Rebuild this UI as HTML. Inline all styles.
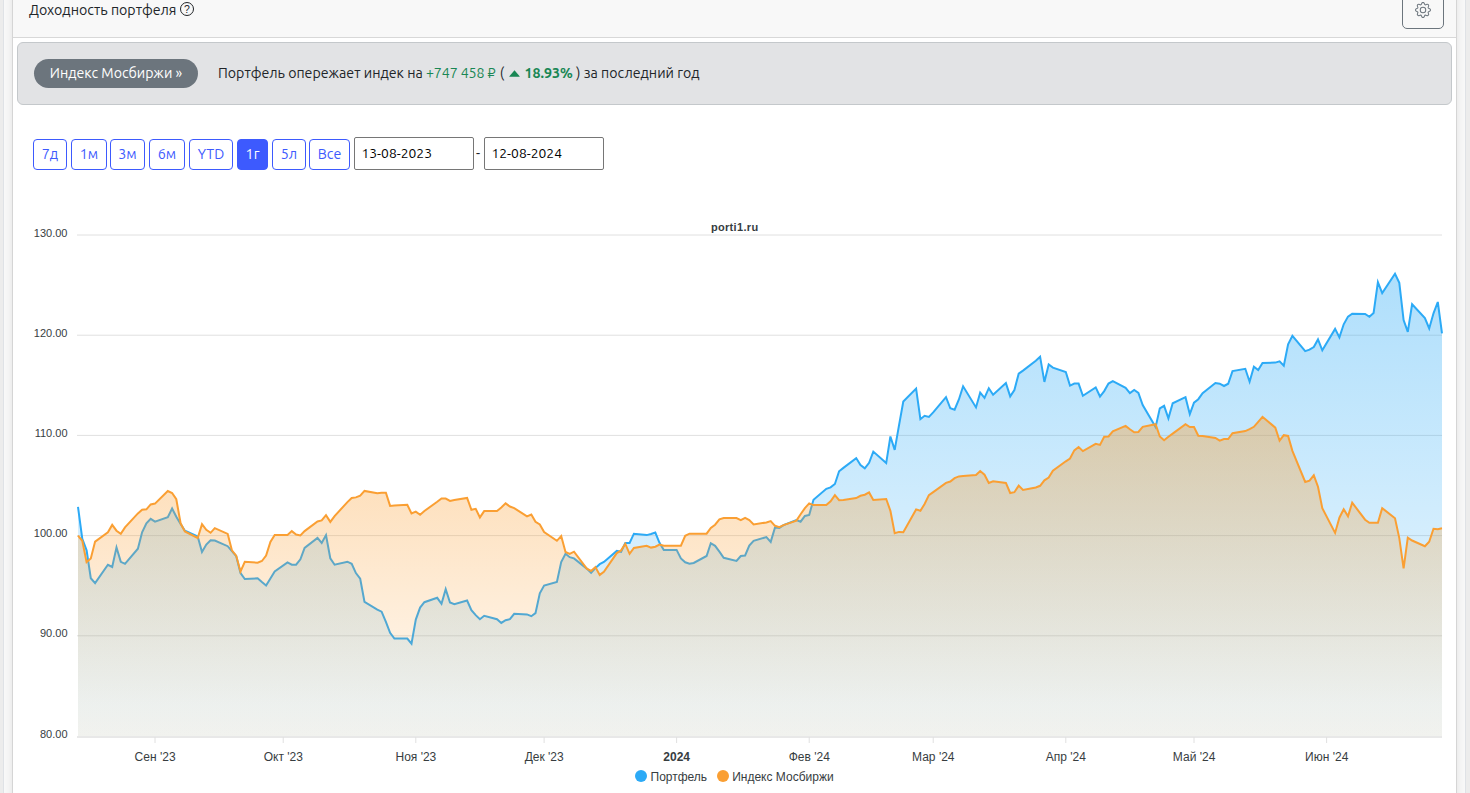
<!DOCTYPE html>
<html lang="ru"><head><meta charset="utf-8"><title>Доходность портфеля</title>
<style>
html,body{margin:0;padding:0}
body{width:1470px;height:793px;overflow:hidden;background:#ececec;position:relative;font-family:"Ubuntu","Liberation Sans",sans-serif;font-size:14.2px;color:#212529}
#outer{position:absolute;left:3px;top:-20px;width:1461px;height:900px;border:1px solid #dfe2e6;background:#f8f8f8}
#card{position:absolute;left:12px;top:-20px;width:1443px;height:900px;border:1px solid #d5d5d5;background:#fff;box-shadow:0 0 8px rgba(0,0,0,.09)}
#hdr{position:absolute;left:13px;top:0;width:1443px;height:37px;background:#f8f8f8;border-bottom:1px solid #d8d8d8}
#title{position:absolute;left:29px;top:0;line-height:20px;white-space:nowrap}
#gearbtn{position:absolute;left:1402px;top:-10px;width:40px;height:37px;border:1px solid #6c757d;border-radius:5px}
#alert{position:absolute;left:17px;top:42px;width:1433px;height:61px;border:1px solid #c4c8cb;background:#e2e3e5;border-radius:6px}
#badge{position:absolute;left:34px;top:59px;width:164px;height:29px;border-radius:15px;background:#6c757d;color:#fff;text-align:center;line-height:28px;white-space:nowrap}
#msg{position:absolute;left:218px;top:63px;line-height:20px;white-space:nowrap}
.g{color:#198754}
.b{position:absolute;top:139px;height:29px;border:1px solid #3d5afe;border-radius:4px;color:#3d5afe;text-align:center;line-height:28px;font-size:14.25px;box-sizing:border-box;height:31px}
.b.on{background:#3d5afe;color:#fff}
.inp{position:absolute;top:137px;width:120px;height:33px;box-sizing:border-box;border:1px solid #767676;border-radius:2px;background:#fff;line-height:31px;padding-left:6.5px;font-size:13.85px;color:#000}
#q{position:absolute;left:180px;top:2px;width:14px;height:14px;box-sizing:border-box;border:1px solid #212529;border-radius:50%;font-family:"Liberation Sans",sans-serif;font-size:10.5px;line-height:12.5px;text-align:center;color:#212529}
#dash{position:absolute;left:476px;top:143px;line-height:20px}
</style></head><body>
<div id="outer"></div>
<div id="card"></div>
<div id="hdr"></div>
<div id="title">Доходность портфеля</div>
<div id="q">?</div>
<div id="gearbtn"><svg width="16" height="16" fill="#6c757d" viewBox="0 0 16 16" style="position:absolute;left:12px;top:10.8px"><path d="M8 4.754a3.246 3.246 0 1 0 0 6.492 3.246 3.246 0 0 0 0-6.492M5.754 8a2.246 2.246 0 1 1 4.492 0 2.246 2.246 0 0 1-4.492 0"/><path d="M9.796 1.343c-.527-1.79-3.065-1.79-3.592 0l-.094.319a.873.873 0 0 1-1.255.52l-.292-.16c-1.64-.892-3.433.902-2.54 2.541l.159.292a.873.873 0 0 1-.52 1.255l-.319.094c-1.79.527-1.79 3.065 0 3.592l.319.094a.873.873 0 0 1 .52 1.255l-.16.292c-.892 1.64.901 3.434 2.541 2.54l.292-.159a.873.873 0 0 1 1.255.52l.094.319c.527 1.79 3.065 1.79 3.592 0l.094-.319a.873.873 0 0 1 1.255-.52l.292.16c1.64.893 3.434-.902 2.54-2.541l-.159-.292a.873.873 0 0 1 .52-1.255l.319-.094c1.79-.527 1.79-3.065 0-3.592l-.319-.094a.873.873 0 0 1-.52-1.255l.16-.292c.893-1.64-.902-3.433-2.541-2.54l-.292.159a.873.873 0 0 1-1.255-.52zm-2.633.283c.246-.835 1.428-.835 1.674 0l.094.319a1.873 1.873 0 0 0 2.693 1.115l.291-.16c.764-.415 1.6.42 1.184 1.185l-.159.292a1.873 1.873 0 0 0 1.116 2.692l.318.094c.835.246.835 1.428 0 1.674l-.319.094a1.873 1.873 0 0 0-1.115 2.693l.16.291c.415.764-.42 1.6-1.185 1.184l-.291-.159a1.873 1.873 0 0 0-2.693 1.116l-.094.318c-.246.835-1.428.835-1.674 0l-.094-.319a1.873 1.873 0 0 0-2.692-1.115l-.292.16c-.764.415-1.6-.42-1.184-1.185l.159-.291A1.873 1.873 0 0 0 1.945 8.93l-.319-.094c-.835-.246-.835-1.428 0-1.674l.319-.094A1.873 1.873 0 0 0 3.06 4.377l-.16-.292c-.415-.764.42-1.6 1.185-1.184l.292.159a1.873 1.873 0 0 0 2.692-1.115z"/></svg></div>
<div id="alert"></div>
<div id="badge">Индекс Мосбиржи »</div>
<div id="msg">Портфель опережает индек на <span class="g" style="letter-spacing:-.11px;margin-right:1.2px">+747 458 ₽</span> ( <span class="g"><svg width="11" height="7" viewBox="0 0 11 7" style="vertical-align:1px;margin:0 5px 0 1px"><path d="M5.5 0.3 L10.6 6.2 Q10.9 6.8 10.2 6.8 L0.8 6.8 Q0.1 6.8 0.4 6.2 Z" fill="#198754"/></svg><b>18.93%</b></span> ) за последний год</div>
<div class="b" style="left:33px;width:34px">7д</div><div class="b" style="left:71px;width:36px">1м</div><div class="b" style="left:110px;width:35px">3м</div><div class="b" style="left:149px;width:36px">6м</div><div class="b" style="left:189px;width:44px">YTD</div><div class="b on" style="left:237px;width:31px">1г</div><div class="b" style="left:272px;width:34px">5л</div><div class="b" style="left:309px;width:41px">Все</div>
<div class="inp" style="left:354px">13-08-2023</div>
<div id="dash">-</div>
<div class="inp" style="left:484px">12-08-2024</div>
<svg id="chart" width="1470" height="793" viewBox="0 0 1470 793" style="position:absolute;left:0;top:0">
<defs>
<linearGradient id="gb" x1="0" y1="0" x2="0" y2="1"><stop offset="0" stop-color="#2caaf6" stop-opacity=".38"/><stop offset="1" stop-color="#2caaf6" stop-opacity=".07"/></linearGradient>
<linearGradient id="go" x1="0" y1="0" x2="0" y2="1"><stop offset="0" stop-color="#fa9f33" stop-opacity=".40"/><stop offset=".9" stop-color="#fa9f33" stop-opacity=".08"/><stop offset="1" stop-color="#fa9f33" stop-opacity=".08"/></linearGradient>
<clipPath id="cp"><rect x="77" y="225" width="1366" height="511"/></clipPath>
</defs>
<line x1="77" x2="1442" y1="235.00" y2="235.00" stroke="#e0e0e0" stroke-width="1"/>
<line x1="77" x2="1442" y1="335.20" y2="335.20" stroke="#e0e0e0" stroke-width="1"/>
<line x1="77" x2="1442" y1="435.40" y2="435.40" stroke="#e0e0e0" stroke-width="1"/>
<line x1="77" x2="1442" y1="535.60" y2="535.60" stroke="#e0e0e0" stroke-width="1"/>
<line x1="77" x2="1442" y1="635.80" y2="635.80" stroke="#e0e0e0" stroke-width="1"/>
<g clip-path="url(#cp)">
<path d="M78.0 506.9 L82.3 538.9 L86.6 550.3 L90.8 578.2 L95.1 583.1 L107.9 564.8 L112.2 567.0 L116.5 547.4 L120.8 561.8 L125.0 563.8 L137.9 548.7 L142.1 532.3 L146.4 523.3 L150.7 518.9 L155.0 521.6 L167.8 517.2 L172.1 508.5 L176.3 516.7 L180.6 524.1 L184.9 530.7 L197.7 536.4 L202.0 552.0 L206.3 544.6 L210.6 540.2 L214.8 540.5 L227.7 546.2 L231.9 551.1 L236.2 556.1 L240.5 573.0 L244.8 579.0 L257.6 578.3 L261.9 582.1 L266.1 585.5 L270.4 578.5 L274.7 571.5 L287.5 562.4 L291.8 564.7 L296.1 564.7 L300.4 559.3 L304.6 547.9 L317.5 537.9 L321.7 542.9 L326.0 535.1 L330.3 558.3 L334.6 564.7 L347.4 561.7 L351.7 563.8 L355.9 573.1 L360.2 578.7 L364.5 601.9 L377.3 609.7 L381.6 611.7 L385.9 621.9 L390.1 632.8 L394.4 638.5 L407.3 638.5 L411.5 643.7 L415.8 619.6 L420.1 607.6 L424.4 602.2 L437.2 597.8 L441.5 603.8 L445.7 589.2 L450.0 602.5 L454.3 604.2 L467.1 600.5 L471.4 610.1 L475.7 615.1 L479.9 619.2 L484.2 615.8 L497.0 619.2 L501.3 622.9 L505.6 620.2 L509.9 619.2 L514.2 613.8 L527.0 614.4 L531.3 616.2 L535.5 613.1 L539.8 593.3 L544.1 585.5 L556.9 582.0 L561.2 562.0 L565.5 553.8 L569.7 557.2 L574.0 558.4 L586.8 568.6 L591.1 572.9 L595.4 568.1 L599.7 564.2 L603.9 562.0 L616.8 550.9 L621.1 551.8 L625.3 542.9 L629.6 542.9 L633.9 533.7 L646.7 535.1 L651.0 534.0 L655.3 532.6 L659.5 542.8 L663.8 549.9 L676.6 549.9 L680.9 558.5 L685.2 562.3 L689.5 563.7 L693.7 563.0 L706.6 556.0 L710.8 543.2 L715.1 545.8 L719.4 551.7 L723.7 557.8 L736.5 560.9 L740.8 556.0 L745.1 555.5 L749.3 545.6 L753.6 540.8 L766.4 537.1 L770.7 541.9 L775.0 527.5 L779.3 527.9 L783.5 525.1 L796.4 520.1 L800.6 521.7 L804.9 516.0 L809.2 514.9 L813.5 499.7 L826.3 488.8 L830.6 487.4 L834.9 484.0 L839.1 471.3 L843.4 467.9 L856.2 458.1 L860.5 465.1 L864.8 468.4 L869.1 462.8 L873.3 451.6 L886.2 463.1 L890.4 436.5 L894.7 449.9 L899.0 425.4 L903.3 401.5 L916.1 388.6 L920.4 419.2 L924.6 415.8 L928.9 416.9 L933.2 412.4 L946.0 397.2 L950.3 408.3 L954.6 409.7 L958.9 399.5 L963.1 386.3 L976.0 407.4 L980.2 392.7 L984.5 397.8 L988.8 388.2 L993.1 394.7 L1005.9 383.1 L1010.2 396.4 L1014.4 390.0 L1018.7 373.7 L1023.0 370.6 L1035.8 360.8 L1040.1 356.7 L1044.4 381.9 L1048.7 364.5 L1052.9 367.6 L1065.8 372.0 L1070.0 385.6 L1074.3 383.6 L1078.6 383.6 L1082.9 395.8 L1095.7 387.4 L1100.0 396.5 L1104.2 391.1 L1108.5 383.6 L1112.8 381.1 L1125.6 387.9 L1129.9 393.1 L1134.2 390.0 L1138.4 392.8 L1142.7 405.1 L1155.6 427.1 L1159.8 408.3 L1164.1 405.8 L1168.4 418.3 L1172.7 403.3 L1185.5 397.2 L1189.8 414.2 L1194.0 402.6 L1198.3 399.2 L1202.6 393.2 L1215.4 383.0 L1219.7 383.7 L1224.0 386.0 L1228.2 383.7 L1232.5 371.1 L1245.3 368.8 L1249.6 381.7 L1253.9 366.7 L1258.2 370.1 L1262.5 363.0 L1275.3 362.6 L1279.6 361.3 L1283.8 365.6 L1288.1 344.4 L1292.4 335.9 L1305.2 351.1 L1309.5 349.7 L1313.8 347.1 L1318.0 339.4 L1322.3 350.3 L1335.1 328.9 L1339.4 337.4 L1343.7 324.3 L1348.0 316.6 L1352.2 313.7 L1365.1 313.9 L1369.4 316.8 L1373.6 312.9 L1377.9 282.2 L1382.2 293.1 L1395.0 273.8 L1399.3 282.9 L1403.6 320.1 L1407.8 331.9 L1412.1 304.3 L1424.9 318.0 L1429.2 328.5 L1433.5 313.3 L1437.8 302.0 L1442.0 333.3 L1442.0 736.2 L78.0 736.2 Z" fill="url(#gb)"/>
<path d="M78.0 506.9 L82.3 538.9 L86.6 550.3 L90.8 578.2 L95.1 583.1 L107.9 564.8 L112.2 567.0 L116.5 547.4 L120.8 561.8 L125.0 563.8 L137.9 548.7 L142.1 532.3 L146.4 523.3 L150.7 518.9 L155.0 521.6 L167.8 517.2 L172.1 508.5 L176.3 516.7 L180.6 524.1 L184.9 530.7 L197.7 536.4 L202.0 552.0 L206.3 544.6 L210.6 540.2 L214.8 540.5 L227.7 546.2 L231.9 551.1 L236.2 556.1 L240.5 573.0 L244.8 579.0 L257.6 578.3 L261.9 582.1 L266.1 585.5 L270.4 578.5 L274.7 571.5 L287.5 562.4 L291.8 564.7 L296.1 564.7 L300.4 559.3 L304.6 547.9 L317.5 537.9 L321.7 542.9 L326.0 535.1 L330.3 558.3 L334.6 564.7 L347.4 561.7 L351.7 563.8 L355.9 573.1 L360.2 578.7 L364.5 601.9 L377.3 609.7 L381.6 611.7 L385.9 621.9 L390.1 632.8 L394.4 638.5 L407.3 638.5 L411.5 643.7 L415.8 619.6 L420.1 607.6 L424.4 602.2 L437.2 597.8 L441.5 603.8 L445.7 589.2 L450.0 602.5 L454.3 604.2 L467.1 600.5 L471.4 610.1 L475.7 615.1 L479.9 619.2 L484.2 615.8 L497.0 619.2 L501.3 622.9 L505.6 620.2 L509.9 619.2 L514.2 613.8 L527.0 614.4 L531.3 616.2 L535.5 613.1 L539.8 593.3 L544.1 585.5 L556.9 582.0 L561.2 562.0 L565.5 553.8 L569.7 557.2 L574.0 558.4 L586.8 568.6 L591.1 572.9 L595.4 568.1 L599.7 564.2 L603.9 562.0 L616.8 550.9 L621.1 551.8 L625.3 542.9 L629.6 542.9 L633.9 533.7 L646.7 535.1 L651.0 534.0 L655.3 532.6 L659.5 542.8 L663.8 549.9 L676.6 549.9 L680.9 558.5 L685.2 562.3 L689.5 563.7 L693.7 563.0 L706.6 556.0 L710.8 543.2 L715.1 545.8 L719.4 551.7 L723.7 557.8 L736.5 560.9 L740.8 556.0 L745.1 555.5 L749.3 545.6 L753.6 540.8 L766.4 537.1 L770.7 541.9 L775.0 527.5 L779.3 527.9 L783.5 525.1 L796.4 520.1 L800.6 521.7 L804.9 516.0 L809.2 514.9 L813.5 499.7 L826.3 488.8 L830.6 487.4 L834.9 484.0 L839.1 471.3 L843.4 467.9 L856.2 458.1 L860.5 465.1 L864.8 468.4 L869.1 462.8 L873.3 451.6 L886.2 463.1 L890.4 436.5 L894.7 449.9 L899.0 425.4 L903.3 401.5 L916.1 388.6 L920.4 419.2 L924.6 415.8 L928.9 416.9 L933.2 412.4 L946.0 397.2 L950.3 408.3 L954.6 409.7 L958.9 399.5 L963.1 386.3 L976.0 407.4 L980.2 392.7 L984.5 397.8 L988.8 388.2 L993.1 394.7 L1005.9 383.1 L1010.2 396.4 L1014.4 390.0 L1018.7 373.7 L1023.0 370.6 L1035.8 360.8 L1040.1 356.7 L1044.4 381.9 L1048.7 364.5 L1052.9 367.6 L1065.8 372.0 L1070.0 385.6 L1074.3 383.6 L1078.6 383.6 L1082.9 395.8 L1095.7 387.4 L1100.0 396.5 L1104.2 391.1 L1108.5 383.6 L1112.8 381.1 L1125.6 387.9 L1129.9 393.1 L1134.2 390.0 L1138.4 392.8 L1142.7 405.1 L1155.6 427.1 L1159.8 408.3 L1164.1 405.8 L1168.4 418.3 L1172.7 403.3 L1185.5 397.2 L1189.8 414.2 L1194.0 402.6 L1198.3 399.2 L1202.6 393.2 L1215.4 383.0 L1219.7 383.7 L1224.0 386.0 L1228.2 383.7 L1232.5 371.1 L1245.3 368.8 L1249.6 381.7 L1253.9 366.7 L1258.2 370.1 L1262.5 363.0 L1275.3 362.6 L1279.6 361.3 L1283.8 365.6 L1288.1 344.4 L1292.4 335.9 L1305.2 351.1 L1309.5 349.7 L1313.8 347.1 L1318.0 339.4 L1322.3 350.3 L1335.1 328.9 L1339.4 337.4 L1343.7 324.3 L1348.0 316.6 L1352.2 313.7 L1365.1 313.9 L1369.4 316.8 L1373.6 312.9 L1377.9 282.2 L1382.2 293.1 L1395.0 273.8 L1399.3 282.9 L1403.6 320.1 L1407.8 331.9 L1412.1 304.3 L1424.9 318.0 L1429.2 328.5 L1433.5 313.3 L1437.8 302.0 L1442.0 333.3" fill="none" stroke="#2caaf6" stroke-width="2" stroke-linecap="butt" stroke-linejoin="miter"/>
<path d="M78.0 535.6 L82.3 540.8 L86.6 562.1 L90.8 558.5 L95.1 541.6 L107.9 532.3 L112.2 524.9 L116.5 530.7 L120.8 533.9 L125.0 527.4 L137.9 513.4 L142.1 509.7 L146.4 509.3 L150.7 504.4 L155.0 503.6 L167.8 491.0 L172.1 493.0 L176.3 499.2 L180.6 523.3 L184.9 531.5 L197.7 538.0 L202.0 524.1 L206.3 529.8 L210.6 532.8 L214.8 528.2 L227.7 533.9 L231.9 550.3 L236.2 555.6 L240.5 571.6 L244.8 561.8 L257.6 562.7 L261.9 561.0 L266.1 555.6 L270.4 541.9 L274.7 534.9 L287.5 535.0 L291.8 531.1 L296.1 534.5 L300.4 535.4 L304.6 531.1 L317.5 521.5 L321.7 520.4 L326.0 515.1 L330.3 521.9 L334.6 516.1 L347.4 502.1 L351.7 498.0 L355.9 497.4 L360.2 495.7 L364.5 490.9 L377.3 493.2 L381.6 492.7 L385.9 492.7 L390.1 505.9 L394.4 505.5 L407.3 504.8 L411.5 513.4 L415.8 511.6 L420.1 514.7 L424.4 511.0 L437.2 501.8 L441.5 498.4 L445.7 498.6 L450.0 500.9 L454.3 500.0 L467.1 497.9 L471.4 509.8 L475.7 508.8 L479.9 517.4 L484.2 511.1 L497.0 511.1 L501.3 507.5 L505.6 503.4 L509.9 506.5 L514.2 508.1 L527.0 516.3 L531.3 514.5 L535.5 521.8 L539.8 524.5 L544.1 532.0 L556.9 540.8 L561.2 536.1 L565.5 552.0 L569.7 553.8 L574.0 551.7 L586.8 568.7 L591.1 571.0 L595.4 567.1 L599.7 574.9 L603.9 571.7 L616.8 553.1 L621.1 550.4 L625.3 543.8 L629.6 553.8 L633.9 547.9 L646.7 545.8 L651.0 547.6 L655.3 546.7 L659.5 544.6 L663.8 545.7 L676.6 545.7 L680.9 545.7 L685.2 535.8 L689.5 533.7 L693.7 533.7 L706.6 533.7 L710.8 527.9 L715.1 524.7 L719.4 519.3 L723.7 518.1 L736.5 518.1 L740.8 520.1 L745.1 517.9 L749.3 520.1 L753.6 524.5 L766.4 522.4 L770.7 521.1 L775.0 525.8 L779.3 527.2 L783.5 525.1 L796.4 520.6 L800.6 514.2 L804.9 508.1 L809.2 503.4 L813.5 505.1 L826.3 505.1 L830.6 501.3 L834.9 495.1 L839.1 500.2 L843.4 499.9 L856.2 498.1 L860.5 495.8 L864.8 494.7 L869.1 492.4 L873.3 499.9 L886.2 499.0 L890.4 510.8 L894.7 533.3 L899.0 531.9 L903.3 532.2 L916.1 509.4 L920.4 510.8 L924.6 504.0 L928.9 495.1 L933.2 492.1 L946.0 482.9 L950.3 481.5 L954.6 478.1 L958.9 476.4 L963.1 476.1 L976.0 475.0 L980.2 471.0 L984.5 474.7 L988.8 482.9 L993.1 481.3 L1005.9 482.9 L1010.2 493.0 L1014.4 492.2 L1018.7 485.6 L1023.0 489.9 L1035.8 487.5 L1040.1 485.8 L1044.4 480.3 L1048.7 477.6 L1052.9 470.8 L1065.8 461.3 L1070.0 458.5 L1074.3 450.4 L1078.6 447.0 L1082.9 451.1 L1095.7 443.8 L1100.0 444.9 L1104.2 436.8 L1108.5 436.5 L1112.8 431.3 L1125.6 425.9 L1129.9 429.3 L1134.2 432.3 L1138.4 432.0 L1142.7 426.8 L1155.6 424.2 L1159.8 436.5 L1164.1 440.2 L1168.4 436.8 L1172.7 433.6 L1185.5 424.2 L1189.8 427.0 L1194.0 427.0 L1198.3 435.8 L1202.6 436.0 L1215.4 438.0 L1219.7 440.7 L1224.0 439.0 L1228.2 439.0 L1232.5 433.2 L1245.3 431.1 L1249.6 429.1 L1253.9 426.8 L1258.2 421.8 L1262.5 416.8 L1275.3 427.7 L1279.6 440.7 L1283.8 435.2 L1288.1 435.9 L1292.4 450.9 L1305.2 482.0 L1309.5 480.6 L1313.8 475.3 L1318.0 486.7 L1322.3 508.2 L1335.1 532.9 L1339.4 517.7 L1343.7 509.2 L1348.0 516.3 L1352.2 502.7 L1365.1 519.7 L1369.4 522.8 L1373.6 522.8 L1377.9 522.8 L1382.2 508.1 L1395.0 518.3 L1399.3 538.1 L1403.6 568.3 L1407.8 537.7 L1412.1 540.5 L1424.9 546.2 L1429.2 541.7 L1433.5 528.8 L1437.8 529.2 L1442.0 528.3 L1442.0 736.2 L78.0 736.2 Z" fill="url(#go)"/>
<path d="M78.0 535.6 L82.3 540.8 L86.6 562.1 L90.8 558.5 L95.1 541.6 L107.9 532.3 L112.2 524.9 L116.5 530.7 L120.8 533.9 L125.0 527.4 L137.9 513.4 L142.1 509.7 L146.4 509.3 L150.7 504.4 L155.0 503.6 L167.8 491.0 L172.1 493.0 L176.3 499.2 L180.6 523.3 L184.9 531.5 L197.7 538.0 L202.0 524.1 L206.3 529.8 L210.6 532.8 L214.8 528.2 L227.7 533.9 L231.9 550.3 L236.2 555.6 L240.5 571.6 L244.8 561.8 L257.6 562.7 L261.9 561.0 L266.1 555.6 L270.4 541.9 L274.7 534.9 L287.5 535.0 L291.8 531.1 L296.1 534.5 L300.4 535.4 L304.6 531.1 L317.5 521.5 L321.7 520.4 L326.0 515.1 L330.3 521.9 L334.6 516.1 L347.4 502.1 L351.7 498.0 L355.9 497.4 L360.2 495.7 L364.5 490.9 L377.3 493.2 L381.6 492.7 L385.9 492.7 L390.1 505.9 L394.4 505.5 L407.3 504.8 L411.5 513.4 L415.8 511.6 L420.1 514.7 L424.4 511.0 L437.2 501.8 L441.5 498.4 L445.7 498.6 L450.0 500.9 L454.3 500.0 L467.1 497.9 L471.4 509.8 L475.7 508.8 L479.9 517.4 L484.2 511.1 L497.0 511.1 L501.3 507.5 L505.6 503.4 L509.9 506.5 L514.2 508.1 L527.0 516.3 L531.3 514.5 L535.5 521.8 L539.8 524.5 L544.1 532.0 L556.9 540.8 L561.2 536.1 L565.5 552.0 L569.7 553.8 L574.0 551.7 L586.8 568.7 L591.1 571.0 L595.4 567.1 L599.7 574.9 L603.9 571.7 L616.8 553.1 L621.1 550.4 L625.3 543.8 L629.6 553.8 L633.9 547.9 L646.7 545.8 L651.0 547.6 L655.3 546.7 L659.5 544.6 L663.8 545.7 L676.6 545.7 L680.9 545.7 L685.2 535.8 L689.5 533.7 L693.7 533.7 L706.6 533.7 L710.8 527.9 L715.1 524.7 L719.4 519.3 L723.7 518.1 L736.5 518.1 L740.8 520.1 L745.1 517.9 L749.3 520.1 L753.6 524.5 L766.4 522.4 L770.7 521.1 L775.0 525.8 L779.3 527.2 L783.5 525.1 L796.4 520.6 L800.6 514.2 L804.9 508.1 L809.2 503.4 L813.5 505.1 L826.3 505.1 L830.6 501.3 L834.9 495.1 L839.1 500.2 L843.4 499.9 L856.2 498.1 L860.5 495.8 L864.8 494.7 L869.1 492.4 L873.3 499.9 L886.2 499.0 L890.4 510.8 L894.7 533.3 L899.0 531.9 L903.3 532.2 L916.1 509.4 L920.4 510.8 L924.6 504.0 L928.9 495.1 L933.2 492.1 L946.0 482.9 L950.3 481.5 L954.6 478.1 L958.9 476.4 L963.1 476.1 L976.0 475.0 L980.2 471.0 L984.5 474.7 L988.8 482.9 L993.1 481.3 L1005.9 482.9 L1010.2 493.0 L1014.4 492.2 L1018.7 485.6 L1023.0 489.9 L1035.8 487.5 L1040.1 485.8 L1044.4 480.3 L1048.7 477.6 L1052.9 470.8 L1065.8 461.3 L1070.0 458.5 L1074.3 450.4 L1078.6 447.0 L1082.9 451.1 L1095.7 443.8 L1100.0 444.9 L1104.2 436.8 L1108.5 436.5 L1112.8 431.3 L1125.6 425.9 L1129.9 429.3 L1134.2 432.3 L1138.4 432.0 L1142.7 426.8 L1155.6 424.2 L1159.8 436.5 L1164.1 440.2 L1168.4 436.8 L1172.7 433.6 L1185.5 424.2 L1189.8 427.0 L1194.0 427.0 L1198.3 435.8 L1202.6 436.0 L1215.4 438.0 L1219.7 440.7 L1224.0 439.0 L1228.2 439.0 L1232.5 433.2 L1245.3 431.1 L1249.6 429.1 L1253.9 426.8 L1258.2 421.8 L1262.5 416.8 L1275.3 427.7 L1279.6 440.7 L1283.8 435.2 L1288.1 435.9 L1292.4 450.9 L1305.2 482.0 L1309.5 480.6 L1313.8 475.3 L1318.0 486.7 L1322.3 508.2 L1335.1 532.9 L1339.4 517.7 L1343.7 509.2 L1348.0 516.3 L1352.2 502.7 L1365.1 519.7 L1369.4 522.8 L1373.6 522.8 L1377.9 522.8 L1382.2 508.1 L1395.0 518.3 L1399.3 538.1 L1403.6 568.3 L1407.8 537.7 L1412.1 540.5 L1424.9 546.2 L1429.2 541.7 L1433.5 528.8 L1437.8 529.2 L1442.0 528.3" fill="none" stroke="#fa9f33" stroke-width="2" stroke-linecap="butt" stroke-linejoin="miter"/>
</g>
<line x1="77" x2="1442" y1="736.9" y2="736.9" stroke="#e0e0e0" stroke-width="1.5"/>
<line x1="155.0" x2="155.0" y1="737" y2="743" stroke="#e0e0e0" stroke-width="1"/>
<line x1="283.2" x2="283.2" y1="737" y2="743" stroke="#e0e0e0" stroke-width="1"/>
<line x1="415.8" x2="415.8" y1="737" y2="743" stroke="#e0e0e0" stroke-width="1"/>
<line x1="544.1" x2="544.1" y1="737" y2="743" stroke="#e0e0e0" stroke-width="1"/>
<line x1="676.6" x2="676.6" y1="737" y2="743" stroke="#e0e0e0" stroke-width="1"/>
<line x1="809.2" x2="809.2" y1="737" y2="743" stroke="#e0e0e0" stroke-width="1"/>
<line x1="933.2" x2="933.2" y1="737" y2="743" stroke="#e0e0e0" stroke-width="1"/>
<line x1="1065.8" x2="1065.8" y1="737" y2="743" stroke="#e0e0e0" stroke-width="1"/>
<line x1="1194.0" x2="1194.0" y1="737" y2="743" stroke="#e0e0e0" stroke-width="1"/>
<line x1="1326.6" x2="1326.6" y1="737" y2="743" stroke="#e0e0e0" stroke-width="1"/>
<g font-family='"Liberation Sans",Helvetica,Arial,sans-serif' font-size="11" fill="#373d3f">
<text x="67.5" y="237" text-anchor="end">130.00</text>
<text x="67.5" y="337" text-anchor="end">120.00</text>
<text x="67.5" y="437" text-anchor="end">110.00</text>
<text x="67.5" y="537" text-anchor="end">100.00</text>
<text x="67.5" y="637" text-anchor="end">90.00</text>
<text x="67.5" y="738" text-anchor="end">80.00</text>
<text x="155.1" y="761" font-size="12" text-anchor="middle">Сен '23</text>
<text x="283.3" y="761" font-size="12" text-anchor="middle">Окт '23</text>
<text x="415.9" y="761" font-size="12" text-anchor="middle">Ноя '23</text>
<text x="544.2" y="761" font-size="12" text-anchor="middle">Дек '23</text>
<text x="676.7" y="761" font-size="12" text-anchor="middle" font-weight="700">2024</text>
<text x="809.3" y="761" font-size="12" text-anchor="middle">Фев '24</text>
<text x="933.3" y="761" font-size="12" text-anchor="middle">Мар '24</text>
<text x="1065.9" y="761" font-size="12" text-anchor="middle">Апр '24</text>
<text x="1194.1" y="761" font-size="12" text-anchor="middle">Май '24</text>
<text x="1326.7" y="761" font-size="12" text-anchor="middle">Июн '24</text>
<text x="734.7" y="230.8" text-anchor="middle" font-weight="700" letter-spacing=".33">porti1.ru</text>
<text x="650.5" y="780.6" font-size="12">Портфель</text>
<text x="732.2" y="780.6" font-size="12">Индекс Мосбиржи</text>
</g>
<circle cx="641" cy="776" r="6" fill="#2caaf6"/><circle cx="723" cy="776" r="6" fill="#fa9f33"/>
</svg>
</body></html>
